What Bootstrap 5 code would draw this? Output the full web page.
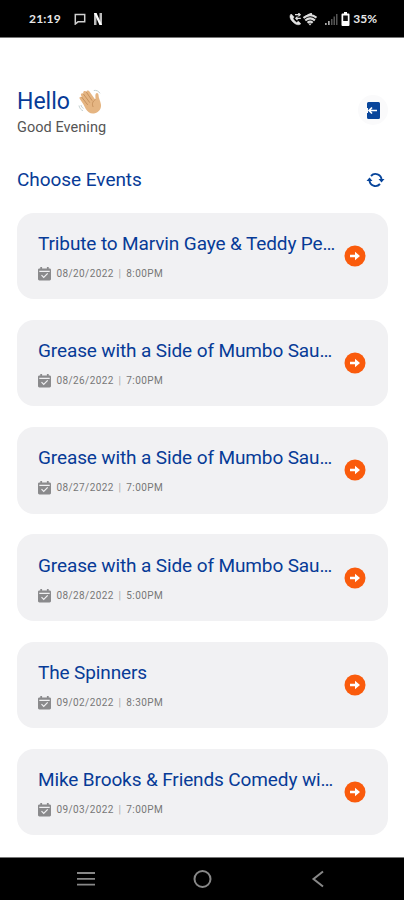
<!DOCTYPE html>
<html lang="en">
<head>
<meta charset="utf-8">
<meta name="viewport" content="width=device-width, initial-scale=1">
<title>Choose Events</title>
<link href="https://cdn.jsdelivr.net/npm/bootstrap@5.3.0/dist/css/bootstrap.min.css" rel="stylesheet">
<style>
  body { font-family: Roboto, "Liberation Sans", sans-serif; height: 900px; overflow: hidden; background: #fff; }
  svg { display: block; flex: none; }
  .status-strip { height: 38px; background: #000; color: #e8e8e8; font: 700 12px/14px Lato, sans-serif; padding: 1px 27px 0 29px; border-bottom: 1px solid #777; }
  .clock { width: 45px; letter-spacing: .2px; }
  .signals { gap: 3px; }
  .signals .wifi { margin-left: -2px; }
  .screen { padding: 50px 16px 0 17px; height: 819px; }
  .blue { color: #073b97; }
  .hello { font-size: 23px; line-height: 28px; }
  .greeting { font-size: 14.5px; line-height: 18px; margin-top: 3px; color: #555; letter-spacing: .05px; }
  .logout { width: 30px; height: 30px; border-radius: 50%; background: #fafafb; margin-top: 7px; }
  .section-title { font-size: 19px; line-height: 24px; margin: 0; font-weight: 400; letter-spacing: -.04px; }
  .section-row { margin-top: 30.5px; margin-bottom: 21px; padding-right: 3px; }
  .events { gap: 20.8px; }
  .event { height: 86.5px; border-radius: 17px; background: #f1f1f3; padding: 0 22px 0 21px; }
  .event-title { font-size: 19px; line-height: 26px; margin: 0; font-weight: 400; white-space: nowrap; letter-spacing: -.12px; }
  .event-date { font-size: 10px; line-height: 14px; color: #777; gap: 5.5px; margin-top: 10px; letter-spacing: .4px; }
  .divider { color: #aaa; margin: 0 2px; }
  .system-nav { height: 43px; background: #000; border-top: 1px solid #777; padding: 0 76px; }
</style>
<script src="https://cdn.jsdelivr.net/npm/bootstrap@5.3.0/dist/js/bootstrap.bundle.min.js"></script>
</head>
<body class="d-flex flex-column">
<svg class="d-none">
  <symbol id="calendar" viewBox="0 0 13 14"><path fill="#8a8a8c" d="M2.300 0h1.800v1.400h4.800V0h1.800v1.400h.9c.8 0 1.400.6 1.400 1.400v9.200c0 .8-.6 1.400-1.400 1.400H1.400C.6 13.400 0 12.800 0 12V2.800C0 2 .6 1.400 1.400 1.400h.9z"/><path fill="none" stroke="#f1f1f3" stroke-width="1.200" d="M1.300 4.300h10.400M3.500 8.200l2.200 2.200 4-4"/></symbol>
  <symbol id="go" viewBox="0 0 22 22"><circle cx="11" cy="11" r="10.500" fill="#fa5b0c"/><path fill="#fff" d="M6 9.800h5V6.800l5 4.200-5 4.200v-3H6z"/></symbol>
</svg>

<header class="status-strip d-flex align-items-center flex-shrink-0">
  <span class="clock">21:19</span>
  <svg width="12" height="12" viewBox="0 0 12 12"><path d="M1.300 1.500h9.400v7.300H4L1.300 11z" fill="none" stroke="#d0d0d0" stroke-width="1.500"/></svg>
  <svg class="ms-2" width="8" height="12" viewBox="0 0 8 12"><path d="M0 0h2.500v12H0zM5.500 0H8v12H5.500z" fill="#bbb"/><path d="M0 0h2.500L8 12H5.500z" fill="#fff"/></svg>
  <div class="signals ms-auto d-flex align-items-center">
    <svg width="13" height="13" viewBox="0 0 13 13"><path d="M2.200 1C.3 2.500.6 5.600 3.600 8.700s6.300 3.900 8.200 2.100L9.500 8.300l-1.900 1.100C6 8.500 4.800 7.200 4 5.700l1-1.800z" fill="#e5e5e5" stroke="#e5e5e5" stroke-width=".6"/><path d="M6 1.700h5M9.400 0l1.800 1.700-1.800 1.700M11.800 5.300H7M8.500 3.600 6.800 5.300 8.500 7" fill="none" stroke="#ddd" stroke-width="1.200"/></svg>
    <svg class="wifi" width="14" height="13" viewBox="0 0 14 13"><path d="M.5 5C4.300 1.400 9.300 1.400 13.500 4.600M2.300 7.500c3-2.700 6.400-2.700 9.600-.2M4.500 9.800c1.700-1.400 3.600-1.400 5.200 0M4.500 2.500 9 .6" fill="none" stroke="#ddd" stroke-width="2.100"/><path d="m5.300 10.500 1.700 2 1.700-2z" fill="#ddd"/></svg>
    <svg class="ms-1" width="14" height="13" viewBox="0 0 14 13"><path d="M1 10h1.700v2H1zM4 8h1.700v4H4z" fill="#aaa"/><path d="M7 6h1.500v6H7zM9.500 3.500H11V12H9.500zM12 1h1.500v11H12z" fill="#555"/></svg>
    <svg width="9" height="14" viewBox="0 0 9 14"><path d="M3 0h3v1.500h1.500q1 0 1 1V13q0 1-1 1h-6q-1 0-1-1V2.500q0-1 1-1H3z" fill="#fff"/><path d="M2.200 3.500h4.600V9H2.200z" fill="#111"/></svg>
    <span>35%</span>
  </div>
</header>

<main class="screen flex-shrink-0">
  <div class="d-flex justify-content-between">
    <div>
      <div class="d-flex align-items-center gap-2">
        <span class="hello blue">Hello</span>
        <svg width="25" height="26" viewBox="0 0 25 26"><path d="M5.500 15.500 1.700 9.700C.8 8 2.800 6.900 3.800 8.300L3 6.200C2.400 4.300 4.600 3.700 5.400 5L5.200 3.800C5 2 7.400 1.500 8.300 3c.5-1.800 2.400-1.800 3.200-.4l5.800 8.100c.6-1.700-.5-4.300.5-5.900.9-1.500 2.700-.6 2.700 1.200 0 3.100 1.900 5.900 2.400 9.300.8 4.400-1.900 8-5.900 9-4.200 1-7.200-1-9.200-4.200z" fill="#e5b582"/><path d="m3.800 8.300 5.700 7.300M5.400 5l6.200 8.400M8.300 3l5.600 8.300M17.300 10.700c-2.800 1.600-3.600 4.100-2.300 7" fill="none" stroke="#c48f5b" stroke-width=".9" stroke-linecap="round"/><path d="M15.800 1.500c2.500-.5 4.800.5 6.200 2.800M1 16.500c.4 2.500 1.800 4.300 4 5.200M3 16c.3 1.600 1.200 2.700 2.500 3.400" fill="none" stroke="#c4d0d0" stroke-width="1"/></svg>
      </div>
      <div class="greeting">Good Evening</div>
    </div>
    <div class="logout d-flex align-items-center justify-content-center">
      <svg width="13" height="17" viewBox="0 0 13 17"><path d="M1.500 0h10q1.500 0 1.500 1.500v14q0 1.500-1.500 1.500h-10Q0 17 0 15.500V11h1V6H0V1.500Q0 0 1.500 0z" fill="#08459b"/><path d="M10 8.500H2M5 5.500l-3 3 3 3" fill="none" stroke="#fff" stroke-width="1.700"/></svg>
    </div>
  </div>

  <div class="section-row d-flex align-items-center justify-content-between">
    <h1 class="section-title blue">Choose Events</h1>
    <svg width="19" height="16" viewBox="0 0 18 16"><path d="M4.500 4a6 6 0 0 1 10.500 4M13.500 12A6 6 0 0 1 3 8" fill="none" stroke="#08459b" stroke-width="1.900"/><path d="M0 9h6L3 5.500zM12 7h6l-3 3.500z" fill="#08459b"/></svg>
  </div>

  <section class="events d-flex flex-column">
    <article class="event d-flex align-items-center justify-content-between">
      <div><h2 class="event-title blue">Tribute to Marvin Gaye &amp; Teddy Pe…</h2><div class="event-date d-flex align-items-center"><svg width="13" height="14"><use href="#calendar"/></svg><span>08/20/2022 <span class="divider">|</span> 8:00PM</span></div></div>
      <svg width="22" height="22"><use href="#go"/></svg>
    </article>
    <article class="event d-flex align-items-center justify-content-between">
      <div><h2 class="event-title blue">Grease with a Side of Mumbo Sau…</h2><div class="event-date d-flex align-items-center"><svg width="13" height="14"><use href="#calendar"/></svg><span>08/26/2022 <span class="divider">|</span> 7:00PM</span></div></div>
      <svg width="22" height="22"><use href="#go"/></svg>
    </article>
    <article class="event d-flex align-items-center justify-content-between">
      <div><h2 class="event-title blue">Grease with a Side of Mumbo Sau…</h2><div class="event-date d-flex align-items-center"><svg width="13" height="14"><use href="#calendar"/></svg><span>08/27/2022 <span class="divider">|</span> 7:00PM</span></div></div>
      <svg width="22" height="22"><use href="#go"/></svg>
    </article>
    <article class="event d-flex align-items-center justify-content-between">
      <div><h2 class="event-title blue">Grease with a Side of Mumbo Sau…</h2><div class="event-date d-flex align-items-center"><svg width="13" height="14"><use href="#calendar"/></svg><span>08/28/2022 <span class="divider">|</span> 5:00PM</span></div></div>
      <svg width="22" height="22"><use href="#go"/></svg>
    </article>
    <article class="event d-flex align-items-center justify-content-between">
      <div><h2 class="event-title blue">The Spinners</h2><div class="event-date d-flex align-items-center"><svg width="13" height="14"><use href="#calendar"/></svg><span>09/02/2022 <span class="divider">|</span> 8:30PM</span></div></div>
      <svg width="22" height="22"><use href="#go"/></svg>
    </article>
    <article class="event d-flex align-items-center justify-content-between">
      <div><h2 class="event-title blue">Mike Brooks &amp; Friends Comedy wi…</h2><div class="event-date d-flex align-items-center"><svg width="13" height="14"><use href="#calendar"/></svg><span>09/03/2022 <span class="divider">|</span> 7:00PM</span></div></div>
      <svg width="22" height="22"><use href="#go"/></svg>
    </article>
  </section>
</main>

<footer class="system-nav d-flex align-items-center justify-content-between flex-shrink-0">
  <svg width="20" height="20" viewBox="0 0 20 20"><path d="M1 4h18M1 9.800h18M1 15.600h18" stroke="#888" stroke-width="1.800"/></svg>
  <svg width="20" height="20" viewBox="0 0 20 20"><circle cx="10.500" cy="10" r="8" fill="none" stroke="#888" stroke-width="2"/></svg>
  <svg width="20" height="20" viewBox="0 0 20 20"><path d="M15 2.500 5.500 10l9.500 7.500" fill="none" stroke="#888" stroke-width="2"/></svg>
</footer>
</body>
</html>
